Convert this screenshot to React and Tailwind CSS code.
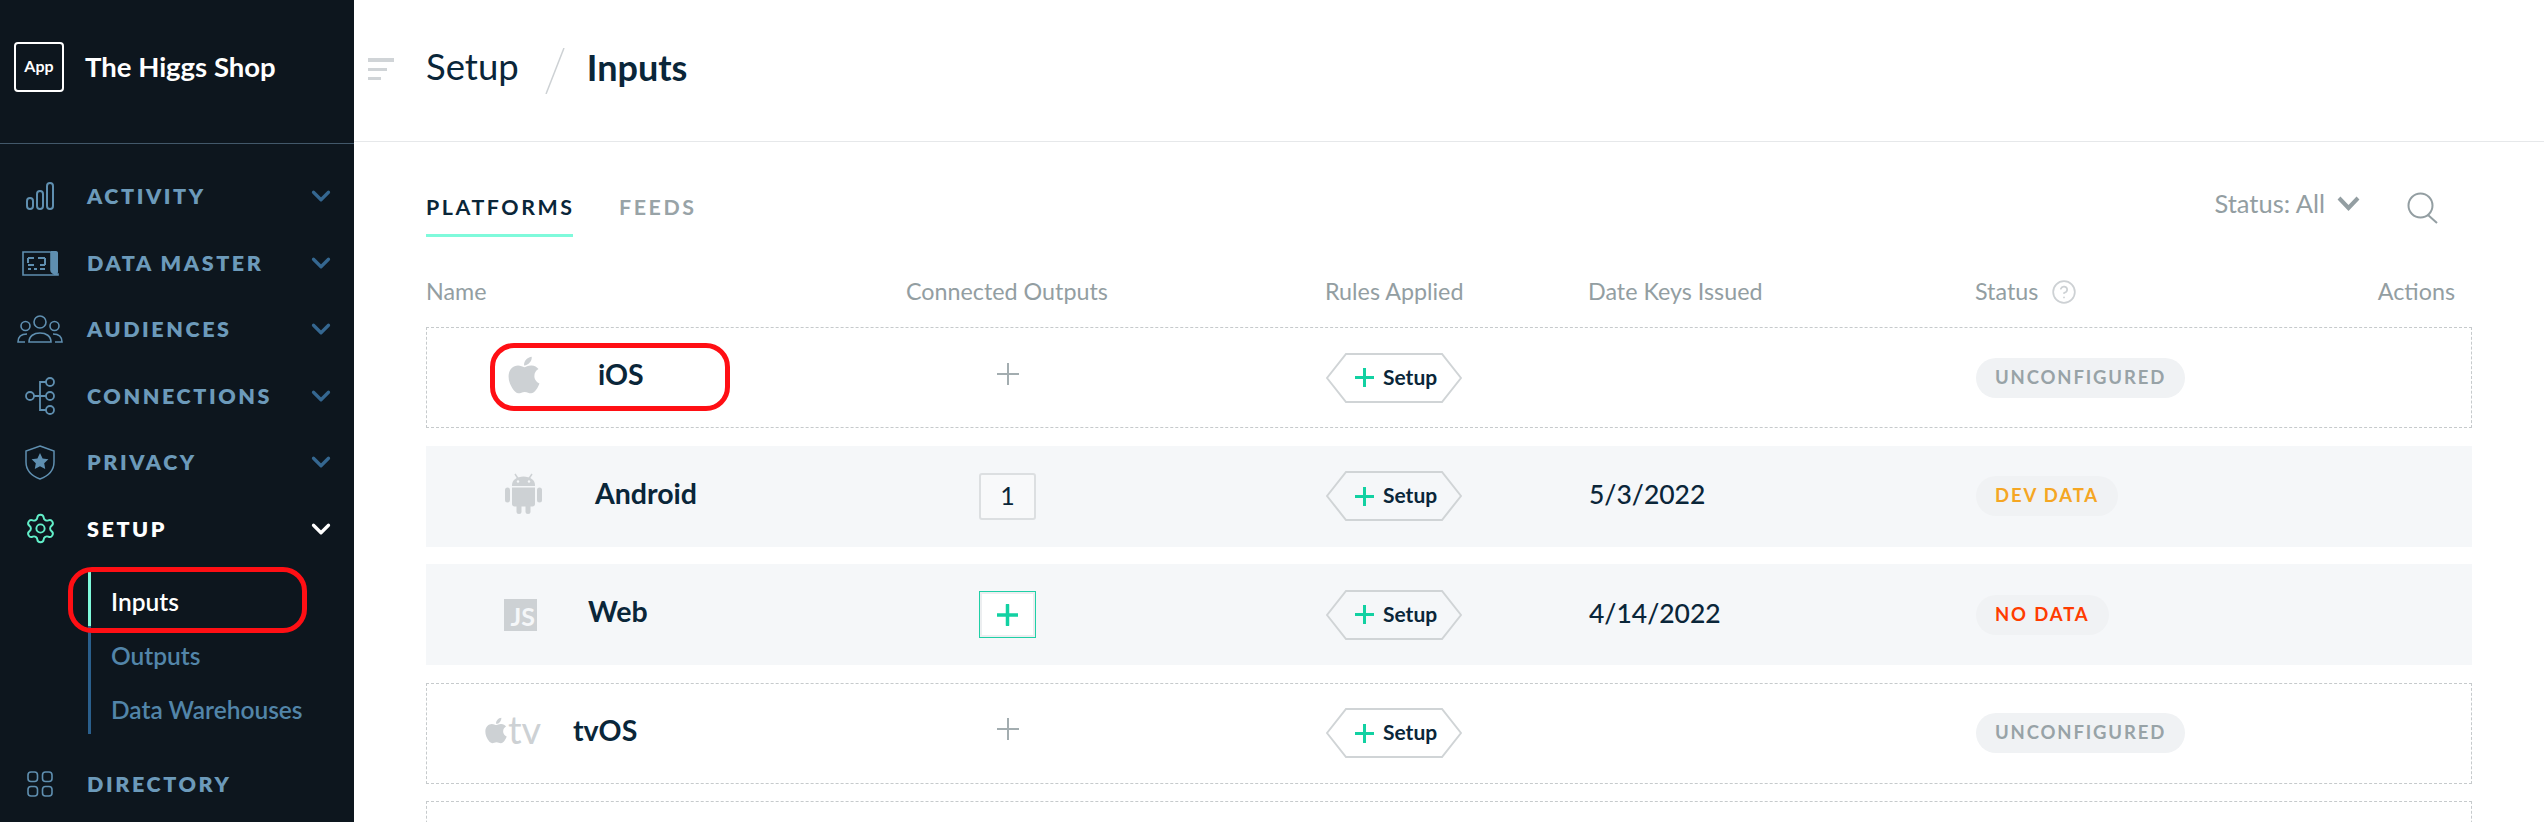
import React from 'react';
import { ChevronDown, Settings, CircleHelp } from 'lucide-react';
import { FaApple } from 'react-icons/fa';

const BarsIcon = () => (
  <svg width="28" height="28" viewBox="0 0 28 28" fill="none" stroke="currentColor" strokeWidth="2">
    <rect x="1" y="16" width="6" height="11" rx="3" />
    <rect x="11" y="9" width="6" height="18" rx="3" />
    <rect x="21" y="1" width="6" height="26" rx="3" />
  </svg>
);

const DataMasterIcon = () => (
  <svg width="37" height="26" viewBox="0 0 37 26" fill="none">
    <path d="M1 2H29V20C29 22 31 24 36 24V25H1Z" stroke="currentColor" strokeWidth="1.6" />
    <path d="M29 1H34C35.5 1 36 2 36 3V22C36 23.5 35 24 33 24C30.5 24 29 22 29 20Z" fill="currentColor" />
    <path d="M6 8H12M16 8H23M6 8V13M23 8V15M6 19H9M12 19H15M18 19H23M6 15H12M18 15H23" stroke="currentColor" strokeWidth="2" />
  </svg>
);

const AudienceIcon = () => (
  <svg width="46" height="28" viewBox="0 0 46 28" fill="none" stroke="currentColor" strokeWidth="1.6">
    <circle cx="23" cy="7" r="6" />
    <circle cx="8.5" cy="11" r="4.5" />
    <circle cx="37.5" cy="11" r="4.5" />
    <path d="M12 27C12 21 17 18 23 18C29 18 34 21 34 27Z" />
    <path d="M8 27H1C1 22 4 19 10 19" />
    <path d="M38 27H45C45 22 42 19 36 19" />
  </svg>
);

const ConnectionsIcon = () => (
  <svg width="30" height="38" viewBox="0 0 30 38" fill="none" stroke="currentColor" strokeWidth="1.8">
    <circle cx="5" cy="19" r="4" />
    <circle cx="25" cy="5" r="4" />
    <circle cx="25" cy="19" r="4" />
    <circle cx="25" cy="33" r="4" />
    <path d="M9 19H21M15 19V5H21M15 19V33H21" />
  </svg>
);

const ShieldIcon = () => (
  <svg width="30" height="35" viewBox="0 0 30 35" fill="none">
    <path d="M15 1L29 6V17C29 25 23 31 15 34C7 31 1 25 1 17V6Z" stroke="currentColor" strokeWidth="1.5" />
    <path d="M15 8L17.6 13.4L23.4 14.2L19.2 18.2L20.2 24L15 21.2L9.8 24L10.8 18.2L6.6 14.2L12.4 13.4Z" fill="currentColor" />
  </svg>
);

const GridIcon = () => (
  <svg width="26" height="26" viewBox="0 0 26 26" fill="none" stroke="currentColor" strokeWidth="1.6">
    <rect x="1" y="1" width="9.5" height="9.5" rx="3" />
    <rect x="15.5" y="1" width="9.5" height="9.5" rx="3" />
    <rect x="1" y="15.5" width="9.5" height="9.5" rx="3" />
    <rect x="15.5" y="15.5" width="9.5" height="9.5" rx="3" />
  </svg>
);

const AndroidIcon = () => (
  <svg width="37" height="41" viewBox="0 0 37 41" fill="#cdd1d4">
    <path d="M10 1L13 5.5M27 1L24 5.5" stroke="#cdd1d4" strokeWidth="1.5" />
    <path d="M7 12C7 7 12 3.5 18.5 3.5C25 3.5 30 7 30 12V13H7Z" />
    <path d="M7 14.5H30V31C30 32.5 29 33.5 27.5 33.5H9.5C8 33.5 7 32.5 7 31Z" />
    <rect x="0" y="14.5" width="5" height="15" rx="2.5" />
    <rect x="32" y="14.5" width="5" height="15" rx="2.5" />
    <rect x="11.5" y="30" width="5" height="11" rx="2.5" />
    <rect x="20.5" y="30" width="5" height="11" rx="2.5" />
    <circle cx="13" cy="8.5" r="1.2" fill="#f5f7f9" />
    <circle cx="24" cy="8.5" r="1.2" fill="#f5f7f9" />
  </svg>
);

const navTop = [
  { label: 'ACTIVITY', icon: <BarsIcon /> },
  { label: 'DATA MASTER', icon: <DataMasterIcon /> },
  { label: 'AUDIENCES', icon: <AudienceIcon /> },
  { label: 'CONNECTIONS', icon: <ConnectionsIcon /> },
  { label: 'PRIVACY', icon: <ShieldIcon /> },
];

const NavRow = ({ label, icon, active, noChevron }) => (
  <div className="flex items-center h-[66.5px] relative">
    <div className={`w-[80px] flex justify-center shrink-0 ${active ? 'text-[#62efc9]' : 'text-[#5f8fb0]'}`}>{icon}</div>
    <span className={`ml-[7px] text-[21.5px] font-extrabold tracking-[0.12em] ${active ? 'text-white' : 'text-[#6c9aba]'}`}>{label}</span>
    {!noChevron && (
      <ChevronDown
        size={30}
        strokeWidth={2.6}
        className={`absolute left-[306px] ${active ? 'text-white' : 'text-[#356790]'}`}
      />
    )}
  </div>
);

const Sidebar = () => (
  <aside className="w-[354px] h-[822px] shrink-0 bg-[#0d161e] overflow-hidden">
    <div className="h-[144px] flex items-center border-b border-[#42586a] pb-[9px]">
      <div className="ml-[14px] w-[50px] h-[50px] border-2 border-white rounded-[4px] flex items-center justify-center text-white text-[16px] font-bold pb-[3px]">
        App
      </div>
      <span className="ml-[21px] text-white text-[27.5px] font-bold">The Higgs Shop</span>
    </div>
    <nav className="pt-[19px]">
      {navTop.map((item) => (
        <NavRow key={item.label} {...item} />
      ))}
      <NavRow label="SETUP" icon={<Settings size={33} strokeWidth={1.4} />} active />
      <div className="relative ml-[88px] mt-[10px] flex flex-col border-l-[3px] border-[#2a5f8c]">
        <div className="absolute -left-[3px] top-0 w-[3px] h-[54px] bg-[#7ffadb]" />
        <div className="h-[54px] flex items-center pl-[20px] pt-[6px] text-white text-[24.5px] font-semibold">Inputs</div>
        <div className="h-[54px] flex items-center pl-[20px] pt-[6px] text-[#5285a9] text-[24.5px] font-semibold">Outputs</div>
        <div className="h-[54px] flex items-center pl-[20px] pt-[6px] text-[#5285a9] text-[24.5px] font-semibold">Data Warehouses</div>
        <div className="absolute -left-[23px] -top-[5px] w-[239px] h-[66px] border-[5px] border-[#ff0f14] rounded-[24px]" />
      </div>
      <div className="mt-[17px]">
        <NavRow label="DIRECTORY" icon={<GridIcon />} noChevron />
      </div>
    </nav>
  </aside>
);

const HexButton = () => (
  <div className="relative w-[136px] h-[50px] flex items-center">
    <svg className="absolute inset-0" width="136" height="50" viewBox="0 0 136 50" fill="none">
      <path d="M20 1H116L135 25L116 49H20L1 25Z" stroke="#d0d4d6" strokeWidth="2" />
    </svg>
    <svg className="relative ml-[29px]" width="19" height="19" viewBox="0 0 19 19">
      <path d="M9.5 0V19M0 9.5H19" stroke="#12d1a2" strokeWidth="3" />
    </svg>
    <span className="relative ml-[9px] pb-[2px] text-[21px] font-bold text-[#0a2639]">Setup</span>
  </div>
);

const Badge = ({ text, color }) => (
  <span className={`inline-flex items-center h-[40px] px-[19px] rounded-full bg-[#f0f2f4] text-[18.5px] font-bold tracking-[0.1em] ${color}`}>
    {text}
  </span>
);

const GrayPlus = () => (
  <svg width="22" height="22" viewBox="0 0 22 22" className="mb-[8px]">
    <path d="M11 0V22M0 11H22" stroke="#a3adb0" strokeWidth="2" />
  </svg>
);

const OneBox = () => (
  <div className="w-[57px] h-[47px] border-2 border-[#dcdfe1] rounded-[3px] bg-[#f8f9fa] flex items-center justify-center text-[25px] text-[#0a2639]">
    1
  </div>
);

const AddBox = () => (
  <div className="w-[57px] h-[47px] border border-[#1fd0a6] bg-white">
    <div className="w-full h-full border-2 border-[#eceef0] flex items-center justify-center">
      <svg width="21" height="22" viewBox="0 0 21 22">
        <path d="M10.5 1V21M0 11H21" stroke="#12d1a2" strokeWidth="3.5" strokeLinecap="round" />
      </svg>
    </div>
  </div>
);

const rows = [
  {
    name: 'iOS',
    icon: <FaApple className="w-[34px] h-[42px] mb-[6px] text-[#cdd1d4]" />,
    iconCls: 'ml-[80px] w-[36px]',
    nameCls: 'ml-[55px]',
    outputs: <GrayPlus />,
    date: '',
    badge: <Badge text="UNCONFIGURED" color="text-[#98a3a7]" />,
    style: 'border border-dashed border-[#c6cacc]',
    circled: true,
  },
  {
    name: 'Android',
    icon: <div className="mb-[6px]"><AndroidIcon /></div>,
    iconCls: 'ml-[78px] w-[38px]',
    nameCls: 'ml-[52px]',
    outputs: <OneBox />,
    date: '5/3/2022',
    badge: <Badge text="DEV DATA" color="text-[#f5a623]" />,
    style: 'border border-transparent bg-[#f5f7f9]',
  },
  {
    name: 'Web',
    icon: (
      <div className="w-[33px] h-[32px] bg-[#cdd1d4] flex items-end justify-end pr-[2px] text-[#f5f7f9] text-[25px] leading-[30px] font-bold">
        JS
      </div>
    ),
    iconCls: 'ml-[77px] w-[33px]',
    nameCls: 'ml-[51px]',
    outputs: <AddBox />,
    date: '4/14/2022',
    badge: <Badge text="NO DATA" color="text-[#ff3c00]" />,
    style: 'border border-transparent bg-[#f5f7f9]',
  },
  {
    name: 'tvOS',
    icon: (
      <div className="flex items-center mb-[5px] text-[#cdd1d4]">
        <FaApple className="w-[24px] h-[29px]" />
        <span className="text-[38px] leading-none font-normal pb-[3px]">tv</span>
      </div>
    ),
    iconCls: 'ml-[57px] w-[54px]',
    nameCls: 'ml-[35px]',
    outputs: <GrayPlus />,
    date: '',
    badge: <Badge text="UNCONFIGURED" color="text-[#98a3a7]" />,
    style: 'border border-dashed border-[#c6cacc]',
  },
];

const gridCols = 'grid grid-cols-[480px_201px_481px_387px_1fr] items-center';

const Row = ({ row }) => (
  <div className={`${gridCols} h-[101px] shrink-0 ${row.style}`}>
    <div className="relative flex items-center">
      <div className={`${row.iconCls} shrink-0 flex items-center`}>{row.icon}</div>
      <span className={`${row.nameCls} pb-[6px] text-[28.5px] font-bold text-[#0a2639]`}>{row.name}</span>
      {row.circled && (
        <div className="absolute left-[63px] top-1/2 -translate-y-1/2 mt-[-1px] w-[240px] h-[68px] border-[5px] border-[#ff0f14] rounded-[24px]" />
      )}
    </div>
    <div className="flex justify-center">{row.outputs}</div>
    <div className="pl-[218px]">
      <HexButton />
    </div>
    <div className="text-[26.5px] font-medium text-[#0a2639] pb-[2px]">{row.date}</div>
    <div>{row.badge}</div>
  </div>
);

const App = () => (
  <div className="flex w-[2544px] h-[822px] overflow-hidden bg-white font-[family-name:Lato,sans-serif]">
    <Sidebar />
    <main className="flex-1 min-w-0">
      <header className="h-[142px] border-b border-[#e6e8ea] flex items-center">
        <svg className="ml-[14px] mb-[2px]" width="26" height="23" viewBox="0 0 26 23" fill="#d0d4d7">
          <rect width="26" height="4" />
          <rect y="10" width="19" height="3" />
          <rect y="19" width="13" height="3" />
        </svg>
        <span className="ml-[32px] pb-[8px] text-[36.5px] text-[#0a2639]">Setup</span>
        <svg className="ml-[26px]" width="20" height="46" viewBox="0 0 20 46">
          <path d="M19 0L1 46" stroke="#cdd1d4" strokeWidth="1.5" />
        </svg>
        <span className="ml-[22px] pb-[8px] text-[36px] font-bold text-[#0a2639]">Inputs</span>
      </header>

      <div className="px-[72px]">
        <div className="h-[95px] flex items-end justify-between">
          <div className="flex gap-[46px]">
            <div className="h-[46px] w-[147px] border-b-[3px] border-[#7ffadb] text-[21.4px] font-bold tracking-[0.12em] text-[#0a2639] whitespace-nowrap">
              PLATFORMS
            </div>
            <div className="h-[46px] text-[21.4px] font-bold tracking-[0.12em] text-[#98a3a7]">FEEDS</div>
          </div>
          <div className="flex items-center h-[50px] pb-[17px] pr-[33px] text-[#939ea2]">
            <span className="text-[25.5px]">Status: All</span>
            <svg className="ml-[12px]" width="23" height="15" viewBox="0 0 23 15" fill="none">
              <path d="M2 2L11.5 12L21 2" stroke="currentColor" strokeWidth="4" />
            </svg>
            <svg className="ml-[47px] mt-[8px]" width="32" height="32" viewBox="0 0 32 32" fill="none" stroke="currentColor" strokeWidth="2">
              <circle cx="13.5" cy="13.5" r="12" />
              <path d="M21 23L30 31" />
            </svg>
          </div>
        </div>

        <div className={`${gridCols} h-[90px] pt-[19px] text-[23.3px] text-[#939ea2]`}>
          <div>Name</div>
          <div className="text-center whitespace-nowrap">Connected Outputs</div>
          <div className="pl-[218px]">Rules Applied</div>
          <div>Date Keys Issued</div>
          <div className="flex items-center justify-between pr-[17px]">
            <span className="flex items-center gap-[13px]">
              Status
              <CircleHelp size={26} strokeWidth={1.6} className="text-[#cdd1d4]" />
            </span>
            <span>Actions</span>
          </div>
        </div>

        <div className="flex flex-col gap-[17.5px]">
          {rows.map((row) => (
            <Row key={row.name} row={row} />
          ))}
          <div className="h-[101px] shrink-0 border border-dashed border-[#c6cacc]" />
        </div>
      </div>
    </main>
  </div>
);

export default App;
